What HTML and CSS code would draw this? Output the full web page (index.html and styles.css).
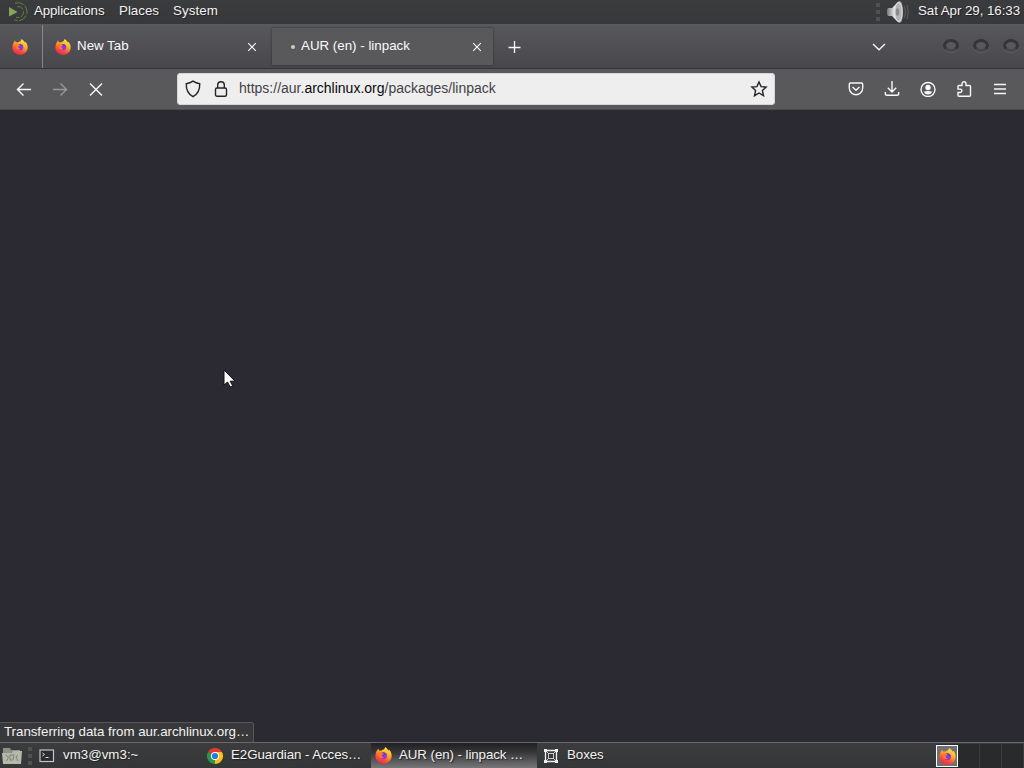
FILE: index.html
```
<!DOCTYPE html>
<html lang="en">
<head>
    <title>AUR (en) - linpack</title>
    <meta charset="UTF-8">
    <link rel="stylesheet" href="styles.css">
</head>
<body>
    <svg class="defs" width="0" height="0">
        <defs>
            <linearGradient id="flame" x1="0.8" y1="0" x2="0.3" y2="1">
                <stop offset="0" stop-color="#fff14f"/>
                <stop offset="0.4" stop-color="#ffac27"/>
                <stop offset="0.7" stop-color="#ff5533"/>
                <stop offset="1" stop-color="#ee2450"/>
            </linearGradient>
            <linearGradient id="cone" x1="0" y1="0" x2="1" y2="0">
                <stop offset="0" stop-color="#777"/>
                <stop offset="0.5" stop-color="#eee"/>
                <stop offset="1" stop-color="#999"/>
            </linearGradient>
            <symbol id="firefox" viewBox="0 0 16 16">
                <path fill="url(#flame)" d="M1.3 4.2C2 3.3 2.5 2.2 3 1.3l.8 2.2c.8-.3 1.5-.2 2.2.1.6-.8 1.6-1.2 2.5-1.4C9 1.5 9.3.7 9.6 0c1.200 1 2.600 2.100 3.300 3.500l.5-.8c1.700 1.900 2.500 4.200 2.200 6.500-.5 3.900-3.800 6.500-7.600 6.500C3.900 15.700.5 12.700.4 8.700.3 7.100.7 5.500 1.300 4.200z"/>
                <circle cx="7.900" cy="8.200" r="3.300" fill="#8a3bdc"/>
                <path fill="#5540b8" d="M6.500 5.400c1.800-.7 4 .3 4.600 2.200-.8-.7-1.600-.8-2.300-.4z"/>
                <path fill="#ff7b2a" d="M3.300 5.200c1-.7 2.100-.6 3-.1l1.900.9c-.2.900-1.300.8-1.700 1.300-.5 1 .300 2.500 1.700 2.400-.6 1.300-2.500 1.200-3.600.2C3.600 8.800 3.100 6.500 3.300 5.200z"/>
            </symbol>
            <symbol id="close" viewBox="0 0 10 10">
                <path d="M1.200 1.200l7.600 7.600M8.800 1.200L1.200 8.800" stroke="currentColor" stroke-width="1.100" fill="none"/>
            </symbol>
        </defs>
    </svg>

    <header class="panel">
        <svg class="mate" width="20" height="20" viewBox="0 0 20 20" fill="none">
            <path d="M1 6l8.500 5L1 15.500z" fill="#87a556"/>
            <path d="M7 2.200a9 9 0 1 1-1 16.500" stroke="#66813f" stroke-dasharray="9 1.500"/>
            <path d="M9 5.700a5.500 5.500 0 1 1-1 10.500" stroke="#66813f" stroke-dasharray="7 1.500"/>
        </svg>
        <span class="menu menu-apps">Applications</span>
        <span class="menu menu-places">Places</span>
        <span class="menu menu-system">System</span>
        <span class="grip"></span>
        <svg class="volume" width="24" height="24" viewBox="0 0 24 24">
            <path d="M2 8h4l5-5c3-4 6-1 6 9s-3 13-6 9l-5-5H2C.5 14 .5 10 2 8z" fill="url(#cone)"/>
            <ellipse cx="12.500" cy="12" rx="3.700" ry="9.500" fill="#b5b5b5" stroke="#e0e0e0"/>
            <ellipse cx="11.500" cy="12" rx="1.700" ry="3.700" fill="#888"/>
            <path d="M18.500 6q2 6 0 12M21 5q2.500 7 0 14" stroke="#5c5c60" fill="none"/>
        </svg>
        <span class="clock">Sat Apr 29, 16:33</span>
    </header>

    <div class="tabs">
        <div class="pinned"><svg width="16" height="16"><use href="#firefox"/></svg></div>
        <div class="tab">
            <svg width="16" height="16"><use href="#firefox"/></svg>
            <span class="tab-title">New Tab</span>
            <svg class="tab-close" width="10" height="10"><use href="#close"/></svg>
        </div>
        <div class="tab active">
            <span class="loading"></span>
            <span class="tab-title">AUR (en) - linpack</span>
            <svg class="tab-close" width="10" height="10"><use href="#close"/></svg>
        </div>
        <svg class="plus" width="14" height="14" viewBox="0 0 14 14"><path d="M6.500 1v12M.5 7.500h12" stroke="#f8f8f8" stroke-width="1.300"/></svg>
        <svg class="all-tabs" width="14" height="8" viewBox="0 0 14 8" fill="none"><path d="M1 1l6 5.800L13 1" stroke="#f5f5f5" stroke-width="1.400"/></svg>
        <div class="window-buttons">
            <i class="knob"></i><i class="knob"></i><i class="knob"></i>
        </div>
    </div>

    <div class="toolbar">
        <svg class="tool back" width="16" height="16" viewBox="0 0 16 16"><path d="M15 8.500H1.500M7.500 2.500l-6 6 6 6"/></svg>
        <svg class="tool forward" width="16" height="16" viewBox="0 0 16 16"><path d="M1 8.500h13.500M8.500 2.500l6 6-6 6"/></svg>
        <svg class="tool stop" width="16" height="16" viewBox="0 0 16 16"><path d="M2 2.500l12 12M14 2.500l-12 12"/></svg>
        <div class="urlbar">
            <svg class="shield" width="16" height="18" viewBox="0 0 16 18"><path d="M8 1.200c2 1.300 4.100 2.100 6.700 2.500C15 9.500 12.700 14 8 16.700 3.300 14 1 9.500 1.300 3.700 3.900 3.300 6 2.500 8 1.200z"/></svg>
            <svg class="lock" width="14" height="18" viewBox="0 0 14 18"><rect x="1.500" y="8" width="11" height="8.300" rx="1.500"/><path d="M3.700 8V5a3.300 3.300 0 0 1 6.600 0v3"/></svg>
            <span class="url">https://aur.<b>archlinux.org</b>/packages/linpack</span>
            <svg class="star" width="18" height="18" viewBox="0 0 18 18"><path d="M9 2l2.100 4.600 5 .5-3.700 3.400 1.100 5.200L9 13 4.500 15.700l1.100-5.200L1.900 7.100l5-.5z"/></svg>
        </div>
        <div class="actions">
            <svg class="tool" width="16" height="16" viewBox="0 0 16 16"><path d="M2.500 2h11c.7 0 1.200.5 1.200 1.200V7a6.700 6.700 0 0 1-13.400 0V3.200C1.300 2.500 1.800 2 2.500 2zM4.500 6L8 9.200 11.500 6"/></svg>
            <svg class="tool" width="16" height="16" viewBox="0 0 16 16"><path d="M8 0v11M3.800 6.800L8 11l4.200-4.200M1.300 11v1.500c0 1 .7 1.800 1.800 1.800h9.800c1.100 0 1.800-.8 1.800-1.800V11"/></svg>
            <svg class="tool" width="16" height="16" viewBox="0 0 16 16"><circle cx="8" cy="8.500" r="7"/><circle cx="8" cy="6.500" r="2.700" fill="#f8f8f8" stroke="none"/><path d="M3.700 10.800Q8 9 12.300 10.800 11 13.500 8 13.500T3.700 10.800z" fill="#f8f8f8" stroke="none"/></svg>
            <svg class="tool" width="16" height="16" viewBox="0 0 16 16"><path d="M6 4.500V2.800a2 2 0 0 1 4 0v1.700h3.500c.6 0 1 .4 1 1v8.700c0 .6-.4 1-1 1H3c-.6 0-1-.4-1-1v-2.700h2.200a1.700 1.700 0 0 0 0-3.400H2V5.500c0-.6.4-1 1-1z"/></svg>
            <svg class="tool" width="16" height="16" viewBox="0 0 16 16"><path d="M2 3.500h12M2 8h12M2 12.500h12"/></svg>
        </div>
    </div>

    <main class="page">
        <svg class="cursor" width="14" height="20" viewBox="0 0 14 20"><path d="M1 1v15l3.500-3 2.700 5 2.500-1.300-2.600-4.500H12z" fill="#fff" stroke="#111"/></svg>
        <div class="status"><span>Transferring data from aur.archlinux.org…</span></div>
    </main>

    <footer class="taskbar">
        <svg class="files" width="20" height="18" viewBox="0 0 20 18">
            <path d="M1 1h7l1 2h9v4H1z" fill="#8e9285"/>
            <path d="M0 6h10l1-2h9l-1 13H1z" fill="#b5b9aa"/>
            <path d="M3.500 8l3 2-2 4M8 8h4l-1 5H8zM16 8l-2 2 2 4" stroke="#7d8374" fill="none"/>
        </svg>
        <span class="grip small"></span>
        <div class="task terminal">
            <svg width="16" height="14" viewBox="0 0 16 14" fill="none"><rect x="1" y="1" width="13.500" height="11.500" fill="#2b2d30" stroke="#c4c4c4" stroke-width="1.200"/><path d="M3.500 4l2 1.500-2 1.500M6.500 8.500h3" stroke="#ddd"/></svg>
            <span>vm3@vm3:~</span>
        </div>
        <div class="task guardian">
            <svg width="16" height="16" viewBox="0 0 16 16">
                <path d="M8 8L1.070 4A8 8 0 0 1 14.930 4z" fill="#e33b2e"/>
                <path d="M8 8l6.930-4A8 8 0 0 1 8 16z" fill="#fbc116"/>
                <path d="M8 8v8A8 8 0 0 1 1.070 4z" fill="#269a49"/>
                <path d="M8 4h6.930L11.500 10z" fill="#fbc116"/>
                <circle cx="8" cy="8" r="4" fill="#fff"/><circle cx="8" cy="8" r="3.100" fill="#2878e4"/>
            </svg>
            <span>E2Guardian - Acces…</span>
        </div>
        <div class="task current">
            <svg width="17" height="17"><use href="#firefox"/></svg>
            <span>AUR (en) - linpack …</span>
        </div>
        <div class="task boxes">
            <svg width="16" height="16" viewBox="0 0 16 16" fill="none" stroke="#f2f2f2"><path d="M2.500 2.500h11v11h-11z" stroke-width="1.300"/><path d="M5.500 5.500h5v5h-5zM2 2l3.500 3.500M14 2l-3.500 3.500M2 14l3.500-3.500M14 14l-3.500-3.500" stroke-width=".8"/><path d="M1 1h3v3H1zM12 1h3v3h-3zM1 12h3v3H1zM12 12h3v3h-3z" fill="#eee" stroke="none"/></svg>
            <span>Boxes</span>
        </div>
        <div class="switcher">
            <div class="workspace live"><svg width="17" height="17"><use href="#firefox"/></svg></div>
            <div class="workspace"></div>
            <div class="workspace"></div>
            <div class="workspace"></div>
        </div>
    </footer>
</body>
</html>
```

FILE: styles.css
```
* {
    box-sizing: border-box;
}

body {
    margin: 0;
    height: 768px;
    display: flex;
    flex-direction: column;
    overflow: hidden;
    background: #2b2a33;
    color: #f2f2f2;
    font: 13.33px/20px "Liberation Sans", Arial, sans-serif;
    white-space: nowrap;
}

svg {
    display: block;
    flex: none;
}

.defs {
    position: absolute;
}

.panel {
    height: 24px;
    display: flex;
    align-items: flex-start;
    background: linear-gradient(#3b3c3e, #37383a);
    text-shadow: 1px 1px 1px #222;
}

.mate {
    margin: 1px 0 0 8px;
}

.menu {
    margin-top: 1px;
}

.menu-apps {
    margin-left: 6px;
    width: 85px;
    letter-spacing: -0.12px;
}

.menu-places {
    width: 54px;
}

.menu-system {
    letter-spacing: 0.1px;
}

.grip {
    width: 4px;
    height: 18px;
    margin: 3px 0 0 auto;
    background: repeating-linear-gradient(#505153 0 4px, transparent 4px 7px);
}

.volume {
    margin: 0 8px 0 6px;
}

.clock {
    width: 106px;
    margin-top: 1px;
    letter-spacing: -0.06px;
}

.tabs {
    height: 45px;
    display: flex;
    align-items: center;
    border-top: 1px solid #5b5b5f;
    border-bottom: 1px solid #343438;
    background: linear-gradient(#58585c, #48484c);
}

.pinned {
    width: 43px;
    height: 43px;
    padding: 14px 0 0 12px;
    border-right: 1px solid #87878a;
}

.tab {
    width: 222px;
    height: 37px;
    margin-right: 7px;
    padding: 1px 8px 0 12px;
    display: flex;
    align-items: center;
    color: #fafafa;
}

.tab-title {
    margin: -2px 0 0 6px;
}

.tab-close {
    margin-left: auto;
    margin-right: 0;
}

.active {
    padding: 0 11px 0 19px;
    width: 221px;
    margin-right: 1px;
    background: #59595c;
    box-shadow: 0 0 2px #29292b;
}

.loading {
    width: 4px;
    height: 4px;
    border-radius: 50%;
    background: #ccc;
}

.plus {
    margin-left: 14px;
}

.all-tabs {
    margin-left: auto;
}

.window-buttons {
    display: flex;
    gap: 14px;
    margin: -3px 5px 0 57px;
}

.knob {
    width: 16px;
    height: 13px;
    border: 3px solid #353537;
    border-bottom-color: #48484a;
    border-radius: 50%;
    background: #59595c;
    box-shadow: 0 1px 1px #606064;
}

.toolbar {
    height: 41px;
    display: flex;
    align-items: center;
    background: #59595c;
    border-bottom: 1px solid #4b4b50;
}

.tool {
    fill: none;
    stroke: #f8f8f8;
    stroke-width: 1.4;
}

.back {
    margin-left: 16px;
}

.forward {
    margin-left: 20px;
    opacity: 0.4;
}

.stop {
    margin-left: 20px;
}

.urlbar {
    width: 598px;
    height: 32px;
    margin-left: 73px;
    padding: 0 6px 0 7px;
    display: flex;
    align-items: center;
    border-radius: 3px;
    border: 1px solid #d6d6d8;
    background: #eeeeee;
    color: #424246;
    font-size: 14px;
}

.urlbar svg {
    fill: none;
    stroke: #242428;
    stroke-width: 1.4;
}

.lock {
    margin: 0 11px 0 13px;
}

.url {
    margin-top: -2px;
}

.url b {
    font-weight: normal;
    color: #09090b;
}

.star {
    margin-left: auto;
}

.actions {
    display: flex;
    gap: 20px;
    margin-left: auto;
    margin-right: 16px;
}

.page {
    position: relative;
    flex: 1;
    display: flex;
    align-items: flex-end;
}

.cursor {
    position: absolute;
    left: 223px;
    top: 259px;
}

.status {
    width: 254px;
    height: 20px;
    padding-left: 4px;
    line-height: 17px;
    letter-spacing: -0.04px;
    background: #38383b;
    border: solid #56565b;
    border-width: 1px 1px 0 0;
    border-radius: 0 3px 0 0;
}

.taskbar {
    height: 26px;
    display: flex;
    align-items: center;
    border-top: 1px solid #69696c;
    background: linear-gradient(#3b3c3d, #353637);
    text-shadow: 1px 1px 1px #202020;
}

.files {
    margin-left: 2px;
}

.small {
    height: 18px;
    margin: 0 0 0 6px;
}

.task {
    height: 25px;
    display: flex;
    align-items: center;
}

.task span {
    margin-top: -2px;
    letter-spacing: -0.08px;
}

.terminal {
    width: 168px;
    padding-left: 7px;
    gap: 8px;
}

.terminal span {
    letter-spacing: 0;
}

.guardian {
    width: 171px;
    padding-left: 7px;
    gap: 8px;
}

.current {
    width: 166px;
    padding-left: 4px;
    gap: 7px;
    background: linear-gradient(#202022, #39393b 40%, #77777a);
}

.boxes {
    padding-left: 6px;
    gap: 8px;
}

.switcher {
    display: flex;
    margin-left: auto;
    background: #292a2b;
}

.workspace {
    width: 22px;
    height: 24px;
    border-right: 1px solid #3b3c3d;
}

.live {
    height: 22px;
    margin-top: 1px;
    padding: 2px 0 0 2px;
    border: 1px solid #fff;
    background: #707174;
}
```
